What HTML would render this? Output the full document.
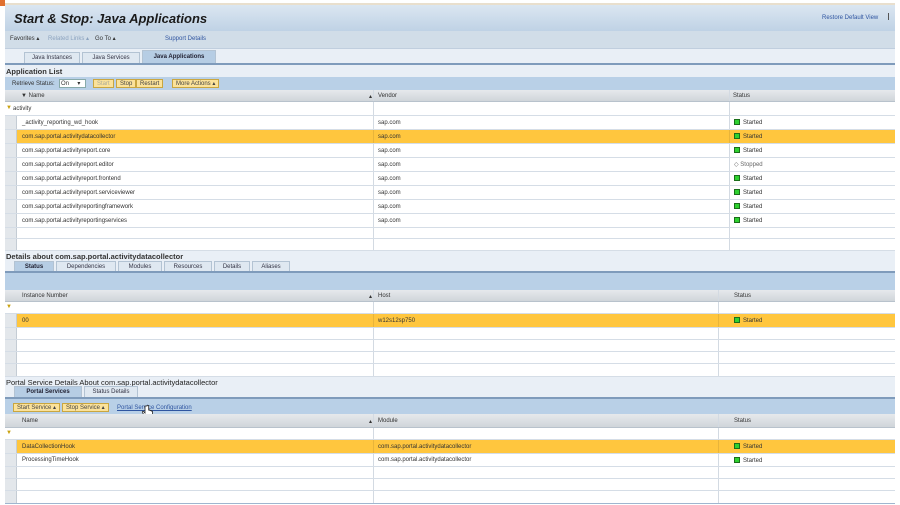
<!DOCTYPE html><html><head><style>
*{margin:0;padding:0;box-sizing:border-box}
body{width:900px;height:505px;background:#fff;font-family:"Liberation Sans",sans-serif;font-size:6px;color:#333;position:relative;overflow:hidden}
.a{position:absolute}
.t{position:absolute;white-space:nowrap}
.row{position:absolute;left:5px;width:890px;background:#fff;border-bottom:1px solid #d5dde6}
.row.hdr{background:linear-gradient(#e6e9ec,#d0d5da);border-bottom:1px solid #b8c2cc}
.row.sel{background:#ffc63e}
.rs{position:absolute;left:0;top:0;bottom:0;width:12px;background:#e3e7eb;border-right:1px solid #c4ccd4}
.vl{position:absolute;top:0;bottom:0;width:1px;background:#d3dae2}
.g{display:inline-block;width:6px;height:6px;background:#2fd12f;border:1px solid #1a6e1a;vertical-align:-1px;margin-right:3px}
.tab{position:absolute;height:11px;background:#dfe8f1;border:1px solid #b3c3d3;border-bottom:none;text-align:center;line-height:10px;font-size:6px;color:#334}
.tab.on{background:#b6cde4;font-weight:bold;color:#223}
.btn{position:absolute;height:9px;background:#fbe29a;border:1px solid #c9a640;line-height:8px;padding:0 3px;font-size:6px;color:#444}
</style></head><body>
<div class="a" style="left:0;top:3px;width:895px;height:2px;background:#e9dfcd"></div>
<div class="a" style="left:0;top:0;width:5px;height:6px;background:#e07030"></div>
<div class="a" style="left:5px;top:5px;width:890px;height:26px;background:linear-gradient(#dbe6f1,#bfd2e5)"></div>
<div class="t" style="left:14px;top:11px;font-size:13px;font-weight:bold;font-style:italic;color:#1a1a1a">Start &amp; Stop: Java Applications</div>
<div class="t" style="left:822px;top:15px;color:#2f55a0">Restore Default View</div>
<div class="a" style="left:888px;top:13px;width:1px;height:7px;background:#555"></div>
<div class="a" style="left:5px;top:31px;width:890px;height:18px;background:#d1dde8;border-bottom:1px solid #c0cede"></div>
<div class="t" style="left:10px;top:35px;color:#333">Favorites ▴</div>
<div class="t" style="left:48px;top:35px;color:#8ca3bf">Related Links ▴</div>
<div class="t" style="left:95px;top:35px;color:#333">Go To ▴</div>
<div class="t" style="left:165px;top:36px;color:#2f55a0">Support Details</div>
<div class="a" style="left:5px;top:49px;width:890px;height:14px;background:#e9eff6"></div>
<div class="tab" style="left:24px;top:52px;width:56px">Java Instances</div>
<div class="tab" style="left:82px;top:52px;width:58px">Java Services</div>
<div class="tab on" style="left:142px;top:50px;width:74px;height:13px;line-height:12px">Java Applications</div>
<div class="a" style="left:5px;top:63px;width:890px;height:2px;background:#7f9bbb"></div>
<div class="a" style="left:5px;top:65px;width:890px;height:12px;background:#e9eff6"></div>
<div class="t" style="left:6px;top:67px;font-size:7.5px;font-weight:bold;color:#333">Application List</div>
<div class="a" style="left:5px;top:77px;width:890px;height:13px;background:#b9d0e7"></div>
<div class="t" style="left:12px;top:81px">Retrieve Status:</div>
<div class="a" style="left:59px;top:79px;width:27px;height:9px;background:#fff;border:1px solid #8aa"></div>
<div class="t" style="left:61px;top:80px">On &nbsp;&nbsp;&nbsp;&nbsp;▾</div>
<div class="btn" style="left:93px;top:79px;color:#aa9">Start</div>
<div class="btn" style="left:116px;top:79px">Stop</div>
<div class="btn" style="left:136px;top:79px">Restart</div>
<div class="btn" style="left:172px;top:79px">More Actions ▴</div>
<!-- grid 1 -->
<div class="row hdr" style="top:90px;height:12px"><div class="t" style="left:16px;top:3px">▼ Name</div><div class="t" style="left:364px;top:3px">▴</div><div class="vl" style="left:368px"></div><div class="t" style="left:373px;top:3px">Vendor</div><div class="vl" style="left:724px"></div><div class="t" style="left:728px;top:3px">Status</div></div>
<div class="row" style="top:102px;height:14px"><div class="t" style="left:1px;top:3px;color:#c9a10e">▼</div><div class="t" style="left:8px;top:4px">activity</div><div class="vl" style="left:368px"></div><div class="vl" style="left:724px"></div></div>
<div class="row" style="top:116px;height:14px"><div class="rs"></div><div class="t" style="left:17px;top:4px">_activity_reporting_wd_hook</div><div class="vl" style="left:368px"></div><div class="t" style="left:373px;top:4px">sap.com</div><div class="vl" style="left:724px"></div><div class="t" style="left:729px;top:3px"><span class="g"></span>Started</div></div>
<div class="row sel" style="top:130px;height:14px"><div class="rs"></div><div class="t" style="left:17px;top:4px">com.sap.portal.activitydatacollector</div><div class="vl" style="left:368px;background:#e8b43a"></div><div class="t" style="left:373px;top:4px">sap.com</div><div class="vl" style="left:724px;background:#e8b43a"></div><div class="t" style="left:729px;top:3px"><span class="g"></span>Started</div></div>
<div class="row" style="top:144px;height:14px"><div class="rs"></div><div class="t" style="left:17px;top:4px">com.sap.portal.activityreport.core</div><div class="vl" style="left:368px"></div><div class="t" style="left:373px;top:4px">sap.com</div><div class="vl" style="left:724px"></div><div class="t" style="left:729px;top:3px"><span class="g"></span>Started</div></div>
<div class="row" style="top:158px;height:14px"><div class="rs"></div><div class="t" style="left:17px;top:4px">com.sap.portal.activityreport.editor</div><div class="vl" style="left:368px"></div><div class="t" style="left:373px;top:4px">sap.com</div><div class="vl" style="left:724px"></div><div class="t" style="left:729px;top:3px;color:#666">◇ Stopped</div></div>
<div class="row" style="top:172px;height:14px"><div class="rs"></div><div class="t" style="left:17px;top:4px">com.sap.portal.activityreport.frontend</div><div class="vl" style="left:368px"></div><div class="t" style="left:373px;top:4px">sap.com</div><div class="vl" style="left:724px"></div><div class="t" style="left:729px;top:3px"><span class="g"></span>Started</div></div>
<div class="row" style="top:186px;height:14px"><div class="rs"></div><div class="t" style="left:17px;top:4px">com.sap.portal.activityreport.serviceviewer</div><div class="vl" style="left:368px"></div><div class="t" style="left:373px;top:4px">sap.com</div><div class="vl" style="left:724px"></div><div class="t" style="left:729px;top:3px"><span class="g"></span>Started</div></div>
<div class="row" style="top:200px;height:14px"><div class="rs"></div><div class="t" style="left:17px;top:4px">com.sap.portal.activityreportingframework</div><div class="vl" style="left:368px"></div><div class="t" style="left:373px;top:4px">sap.com</div><div class="vl" style="left:724px"></div><div class="t" style="left:729px;top:3px"><span class="g"></span>Started</div></div>
<div class="row" style="top:214px;height:14px"><div class="rs"></div><div class="t" style="left:17px;top:4px">com.sap.portal.activityreportingservices</div><div class="vl" style="left:368px"></div><div class="t" style="left:373px;top:4px">sap.com</div><div class="vl" style="left:724px"></div><div class="t" style="left:729px;top:3px"><span class="g"></span>Started</div></div>
<div class="row" style="top:228px;height:11px"><div class="rs"></div><div class="vl" style="left:368px"></div><div class="vl" style="left:724px"></div></div>
<div class="row" style="top:239px;height:12px"><div class="rs"></div><div class="vl" style="left:368px"></div><div class="vl" style="left:724px"></div></div>
<!-- details -->
<div class="a" style="left:5px;top:251px;width:890px;height:21px;background:#e9eff6"></div>
<div class="t" style="left:6px;top:252px;font-size:7.5px;font-weight:bold;color:#333">Details about com.sap.portal.activitydatacollector</div>
<div class="tab on" style="left:14px;top:261px;width:40px">Status</div>
<div class="tab" style="left:56px;top:261px;width:60px">Dependencies</div>
<div class="tab" style="left:118px;top:261px;width:44px">Modules</div>
<div class="tab" style="left:164px;top:261px;width:48px">Resources</div>
<div class="tab" style="left:214px;top:261px;width:36px">Details</div>
<div class="tab" style="left:252px;top:261px;width:38px">Aliases</div>
<div class="a" style="left:5px;top:271px;width:890px;height:2px;background:#7f9bbb"></div>
<div class="a" style="left:5px;top:273px;width:890px;height:17px;background:#b9d0e7"></div>
<div class="row hdr" style="top:290px;height:12px"><div class="t" style="left:17px;top:3px">Instance Number</div><div class="t" style="left:364px;top:3px">▴</div><div class="vl" style="left:368px"></div><div class="t" style="left:373px;top:3px">Host</div><div class="vl" style="left:713px"></div><div class="t" style="left:729px;top:3px">Status</div></div>
<div class="row" style="top:302px;height:12px"><div class="t" style="left:1px;top:2px;color:#c9a10e">▼</div><div class="vl" style="left:368px"></div><div class="vl" style="left:713px"></div></div>
<div class="row sel" style="top:314px;height:14px"><div class="rs"></div><div class="t" style="left:17px;top:4px">00</div><div class="vl" style="left:368px;background:#e8b43a"></div><div class="t" style="left:373px;top:4px">w12s12sp750</div><div class="vl" style="left:713px;background:#e8b43a"></div><div class="t" style="left:729px;top:3px"><span class="g"></span>Started</div></div>
<div class="row" style="top:328px;height:12px"><div class="rs"></div><div class="vl" style="left:368px"></div><div class="vl" style="left:713px"></div></div>
<div class="row" style="top:340px;height:12px"><div class="rs"></div><div class="vl" style="left:368px"></div><div class="vl" style="left:713px"></div></div>
<div class="row" style="top:352px;height:12px"><div class="rs"></div><div class="vl" style="left:368px"></div><div class="vl" style="left:713px"></div></div>
<div class="row" style="top:364px;height:13px"><div class="rs"></div><div class="vl" style="left:368px"></div><div class="vl" style="left:713px"></div></div>
<!-- portal services -->
<div class="a" style="left:5px;top:377px;width:890px;height:20px;background:#e9eff6"></div>
<div class="t" style="left:6px;top:378px;font-size:7.5px;color:#222">Portal Service Details About com.sap.portal.activitydatacollector</div>
<div class="tab on" style="left:14px;top:386px;width:68px">Portal Services</div>
<div class="tab" style="left:84px;top:386px;width:54px">Status Details</div>
<div class="a" style="left:5px;top:397px;width:890px;height:2px;background:#7f9bbb"></div>
<div class="a" style="left:5px;top:399px;width:890px;height:15px;background:#b9d0e7"></div>
<div class="btn" style="left:13px;top:403px">Start Service ▴</div>
<div class="btn" style="left:62px;top:403px">Stop Service ▴</div>
<div class="t" style="left:117px;top:405px;color:#2f55a0;text-decoration:underline">Portal Service Configuration</div>
<svg class="a" style="left:142px;top:405px" width="11" height="14" viewBox="0 0 11 14"><path d="M3 1v7l-1.5-1.5c-1-.8-2 .2-1.2 1L3 11c.8 1.5 2 2.5 4 2.5 2.5 0 3.5-1.5 3.5-4V6.5c0-.8-1.2-.8-1.2 0V6c0-.8-1.3-.8-1.3 0v-.5c0-.8-1.3-.8-1.3 0V1c0-1-1.7-1-1.7 0z" fill="#fff" stroke="#222" stroke-width=".8"/></svg>
<div class="row hdr" style="top:414px;height:14px"><div class="t" style="left:17px;top:4px">Name</div><div class="t" style="left:364px;top:4px">▴</div><div class="vl" style="left:368px"></div><div class="t" style="left:373px;top:4px">Module</div><div class="vl" style="left:713px"></div><div class="t" style="left:729px;top:4px">Status</div></div>
<div class="row" style="top:428px;height:12px"><div class="t" style="left:1px;top:2px;color:#c9a10e">▼</div><div class="vl" style="left:368px"></div><div class="vl" style="left:713px"></div></div>
<div class="row sel" style="top:440px;height:14px"><div class="rs"></div><div class="t" style="left:17px;top:4px">DataCollectionHook</div><div class="vl" style="left:368px;background:#e8b43a"></div><div class="t" style="left:373px;top:4px">com.sap.portal.activitydatacollector</div><div class="vl" style="left:713px;background:#e8b43a"></div><div class="t" style="left:729px;top:3px"><span class="g"></span>Started</div></div>
<div class="row" style="top:454px;height:13px"><div class="rs"></div><div class="t" style="left:17px;top:3px">ProcessingTimeHook</div><div class="vl" style="left:368px"></div><div class="t" style="left:373px;top:3px">com.sap.portal.activitydatacollector</div><div class="vl" style="left:713px"></div><div class="t" style="left:729px;top:3px"><span class="g"></span>Started</div></div>
<div class="row" style="top:467px;height:12px"><div class="rs"></div><div class="vl" style="left:368px"></div><div class="vl" style="left:713px"></div></div>
<div class="row" style="top:479px;height:12px"><div class="rs"></div><div class="vl" style="left:368px"></div><div class="vl" style="left:713px"></div></div>
<div class="row" style="top:491px;height:13px;border-bottom:1px solid #9fb6cf"><div class="rs"></div><div class="vl" style="left:368px"></div><div class="vl" style="left:713px"></div></div>
</body></html>
